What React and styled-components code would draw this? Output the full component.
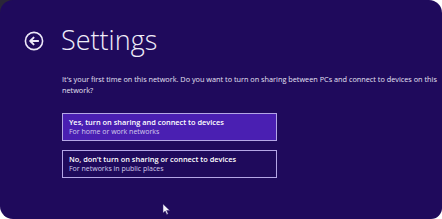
import styled, { createGlobalStyle } from "styled-components";

const Global = createGlobalStyle`
  html, body {
    margin: 0;
    padding: 0;
    background: #ffffff;
  }
  body {
    font-family: "Open Sans", "Noto Sans", sans-serif;
  }
`;

const options = [
  {
    title: "Yes, turn on sharing and connect to devices",
    sub: "For home or work networks",
    selected: true,
  },
  {
    title: "No, don\u2019t turn on sharing or connect to devices",
    sub: "For networks in public places",
    selected: false,
  },
];

export default function App() {
  return (
    <Frame>
      <Global />
      <Panel>
        <Header>
          <BackButton aria-label="Back">
            <svg width="20" height="20" viewBox="0 0 20 20">
              <circle cx="10" cy="10" r="8.6" fill="none" stroke="#ece8f8" strokeWidth="1.6" />
              <path
                d="M14.2 10H6.4M9.6 6.6L6.2 10l3.4 3.4"
                fill="none"
                stroke="#ece8f8"
                strokeWidth="1.9"
                strokeLinecap="round"
                strokeLinejoin="round"
              />
            </svg>
          </BackButton>
          <Title>Settings</Title>
        </Header>
        <Body>
          <Question>
            It's your first time on this network. Do you want to turn on sharing between PCs and
            connect to devices on this network?
          </Question>
          <Options>
            {options.map((o) => (
              <Option key={o.title} $selected={o.selected}>
                <OptionTitle>{o.title}</OptionTitle>
                <OptionSub>{o.sub}</OptionSub>
              </Option>
            ))}
          </Options>
          <CursorRow>
            <svg width="9" height="12" viewBox="0 0 9 12">
              <path d="M1 1v9l2.2-2 1.6 3.4 1.4-.7-1.6-3.2H7.8z" fill="#f4f2fb" stroke="#3a2a70" strokeWidth="0.5" />
            </svg>
          </CursorRow>
        </Body>
      </Panel>
    </Frame>
  );
}

const Frame = styled.div`
  width: 442px;
  height: 219px;
  background: linear-gradient(135deg, #2a2638 0 14px, #ffffff 14px);
`;

const Panel = styled.div`
  width: 442px;
  height: 219px;
  box-sizing: border-box;
  background: #1f0a5c;
  border-radius: 13px 13px 11px 13px;
  padding: 22px 0 0 24px;
  color: #ece8f8;
  overflow: hidden;
`;

const Header = styled.div`
  display: flex;
  align-items: center;
  gap: 17px;
  height: 36px;
`;

const BackButton = styled.div`
  width: 20px;
  height: 20px;
  display: flex;
  margin-top: 1px;
`;

const Title = styled.h1`
  margin: 0;
  font-family: "Open Sans", "Noto Sans", sans-serif;
  font-weight: 300;
  font-size: 27px;
  letter-spacing: 0;
  color: #f0edf9;
  line-height: 36px;
`;

const Body = styled.div`
  padding: 16px 0 0 38px;
  display: flex;
  flex-direction: column;
`;

const Question = styled.p`
  margin: 0;
  font-size: 7.3px;
  line-height: 11px;
  width: 380px;
  color: #e6e2f4;
`;

const Options = styled.div`
  display: flex;
  flex-direction: column;
  gap: 9px;
  margin-top: 17px;
`;

const Option = styled.div`
  width: 215px;
  height: 28px;
  box-sizing: border-box;
  border: 1.5px solid #b4a6e6;
  background: ${(p) => (p.$selected ? "#4a1fb2" : "transparent")};
  padding: 3px 0 0 6px;
  display: flex;
  flex-direction: column;
`;

const OptionTitle = styled.div`
  font-size: 7.4px;
  font-weight: 600;
  line-height: 10px;
  color: #ffffff;
`;

const OptionSub = styled.div`
  font-size: 7px;
  line-height: 10px;
  color: #d4cced;
`;

const CursorRow = styled.div`
  padding: 25px 0 0 100px;
  display: flex;
`;
